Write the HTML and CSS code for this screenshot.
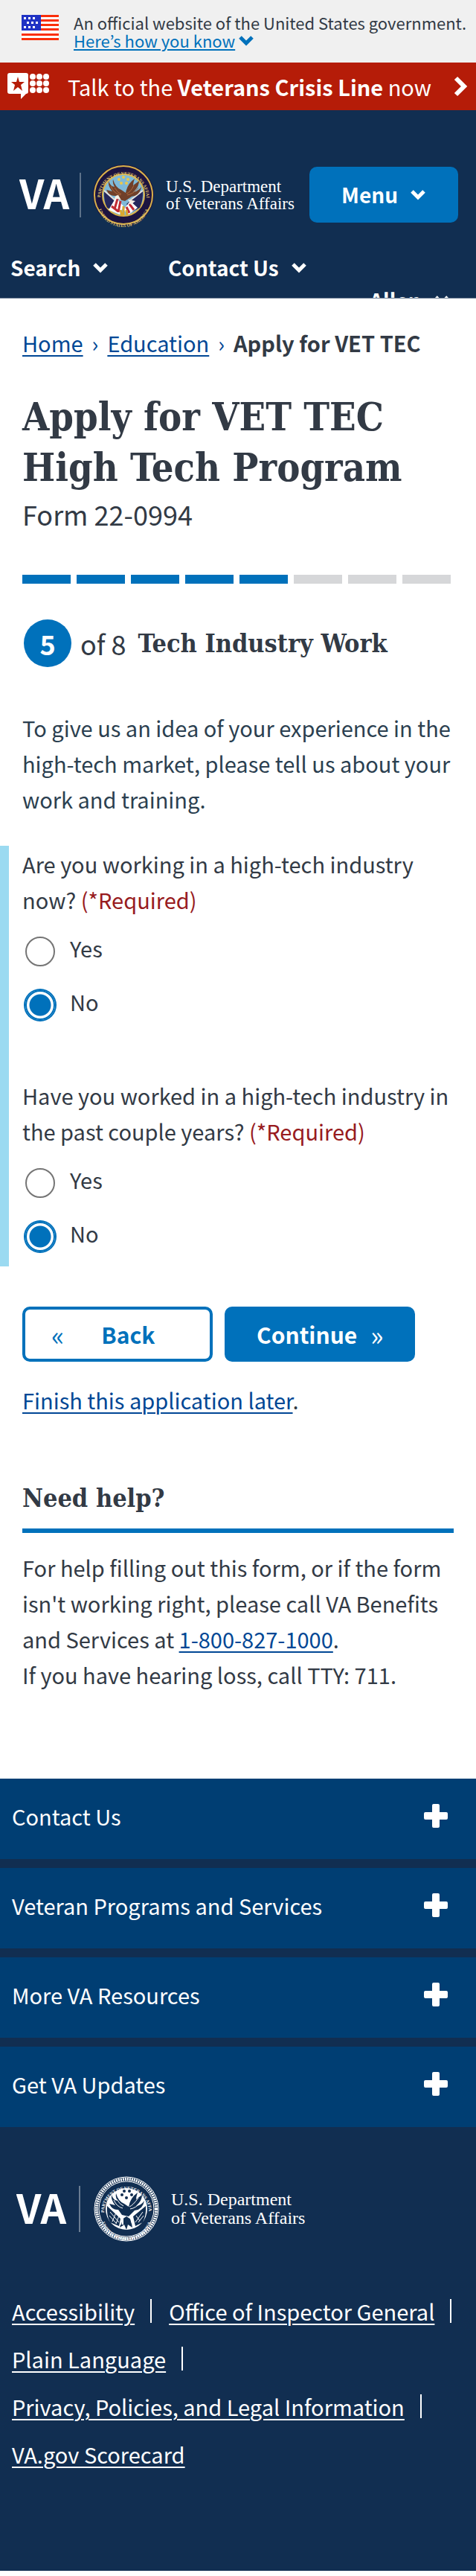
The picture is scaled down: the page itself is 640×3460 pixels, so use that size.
FILE: index.html
```html
<!DOCTYPE html>
<html lang="en">
<head>
<meta charset="utf-8">
<meta name="viewport" content="width=device-width, initial-scale=1">
<title>Apply for VET TEC | Veterans Affairs</title>
<link rel="stylesheet" href="styles.css">
</head>
<body>
<svg class="defs" aria-hidden="true">
  <symbol id="chevron-down" viewBox="0 0 22 16"><path d="M3 4l8 8 8-8" fill="none" stroke="currentColor" stroke-width="5"/></symbol>
  <symbol id="plus" viewBox="0 0 32 32"><path d="M13 0h6q2 0 2 2v9h9q2 0 2 2v6q0 2-2 2h-9v9q0 2-2 2h-6q-2 0-2-2v-9H2q-2 0-2-2v-6q0-2 2-2h9V2q0-2 2-2z" fill="currentColor"/></symbol>
</svg>

<div class="gov">
  <svg class="gov-flag" viewBox="0 0 50 34" aria-hidden="true">
    <path fill="#fff" d="M0 0h50v34H0z"/>
    <path fill="#fa2f0a" d="M0 0h50v3H0zM0 6h50v3H0zM0 12h50v3H0zM0 18h50v3H0zM0 25h50v3H0zM0 31h50v3H0z"/>
    <path fill="#1f32c4" d="M0 0h26v21H0z"/>
    <path fill="#fff" d="M3 3h3v3H3zM9 3h3v3H9zM15 3h3v3h-3zM7 9h3v3H7zM13 9h3v3h-3zM19 9h3v3h-3zM3 15h3v3H3zM9 15h3v3H9zM15 15h3v3h-3z"/>
  </svg>
  <div class="gov-text">
    <p>An official website of the United States government.</p>
    <a class="gov-link" href="#"><span>Here’s how you know</span><svg class="chevron" aria-hidden="true"><use href="#chevron-down"/></svg></a>
  </div>
</div>

<a class="crisis" href="#">
  <svg class="crisis-icon" viewBox="0 0 56 36" aria-hidden="true">
    <path fill="#fff" d="M3 0h22q3 0 3 3v22q0 3-3 3l-7 7v-7H3q-3 0-3-3V3q0-3 3-3z"/>
    <path fill="#b51c08" d="M14 5l2 7h7l-5 4 2 8-6-5-6 5 2-8-5-4h7z"/>
    <g fill="#fff"><circle cx="34" cy="5" r="4"/><circle cx="43" cy="5" r="4"/><circle cx="52" cy="5" r="4"/><circle cx="34" cy="14" r="4"/><circle cx="43" cy="14" r="4"/><circle cx="52" cy="14" r="4"/><circle cx="34" cy="23" r="4"/><circle cx="43" cy="23" r="4"/><circle cx="52" cy="23" r="4"/></g>
  </svg>
  <span class="crisis-text">Talk to the <b>Veterans Crisis Line</b> now</span>
  <svg class="crisis-arrow" viewBox="0 0 20 28" aria-hidden="true"><path d="M4 3l11 11L4 25" fill="none" stroke="#fff" stroke-width="6"/></svg>
</a>

<header class="header">
  <div class="header-main">
    <svg class="logo" viewBox="0 0 380 88" role="img" aria-label="VA, U.S. Department of Veterans Affairs">
      <text class="logo-va" x="0" y="63">VA</text>
      <path d="M82 14v60" stroke="#a9b4c1"/>
      <g transform="translate(140 44)">
        <circle r="41" fill="#1c1440"/>
        <circle r="39" fill="none" stroke="#d9b24a" stroke-width="2"/>
        <circle r="28" fill="#7fb9d8" stroke="#d9b24a" stroke-width="2"/>
        <path id="ring-top" d="M-31 4A31 31 0 1 1 31 4" fill="none"/>
        <path id="ring-bottom" d="M-36 7A36 36 0 0 0 36 7" fill="none"/>
        <text class="seal-text gold"><textPath href="#ring-top" startOffset="50%">DEPARTMENT OF VETERANS AFFAIRS</textPath></text>
        <text class="seal-text gold"><textPath href="#ring-bottom" startOffset="50%">UNITED STATES OF AMERICA</textPath></text>
        <g fill="#ecc94a"><circle cx="0" cy="-24" r="2"/><circle cx="-6" cy="-21" r="2"/><circle cx="6" cy="-21" r="2"/><circle cx="-3" cy="-16" r="2"/><circle cx="4" cy="-16" r="2"/></g>
        <path fill="#25275c" d="M-26-6L-4 14-9 23-22 17q-5-9-4-23zM26-6L4 12l7 11 11-6q5-11 4-23z"/>
        <path d="M-26-6L-8 10M26-6L8 8" stroke="#e9e4dd" stroke-width="2"/>
        <path fill="#fff" d="M-10 3L0 15l-5 11-15-6zM9 8l10 9-12 9-7-6z"/>
        <path fill="none" stroke="#bf2b35" stroke-width="3" d="M-8 5l-4 14M-4 8l-3 15M-16 15l9 7M8 12l6 8M4 16l4 8"/>
        <path fill="#70402a" d="M-20-19q2 7 8 8-3-5-2-10 3 11 11 14L3-3q2-12 12-19-2 6-2 9l8-6q0 8-8 15 7-1 11-7-2 12-13 13L2 8l-8-2-5-5q-8 1-12-8l8 2q-6-7-5-14z"/>
        <path stroke="#b06b3f" fill="none" d="M-17-12q4 10 13 12M-12-10q4 7 9 9M20-10Q13-1 5 0M14-13Q9-3 4-2"/>
        <path fill="#f4efe6" d="M-7 0q-5 0-5 6l4-1 5 2zM6 6l10 2-6 5z"/>
        <path stroke="#d9a72e" stroke-width="3" fill="none" d="M0 15v12M-4 20l2 8M4 20l1 7"/>
      </g>
      <text class="logo-dept logo-dept-top" x="197" y="40">U.S. Department</text>
      <text class="logo-dept logo-dept-top" x="197" y="63">of Veterans Affairs</text>
    </svg>
    <button class="menu" type="button">Menu<svg class="chevron" aria-hidden="true"><use href="#chevron-down"/></svg></button>
  </div>
  <nav class="nav" aria-label="Account">
    <button type="button">Search<svg class="chevron" aria-hidden="true"><use href="#chevron-down"/></svg></button>
    <button type="button">Contact Us<svg class="chevron" aria-hidden="true"><use href="#chevron-down"/></svg></button>
    <button class="nav-user" type="button">Allen<svg class="chevron" aria-hidden="true"><use href="#chevron-down"/></svg></button>
  </nav>
</header>

<main class="main">
  <nav class="crumbs" aria-label="Breadcrumb">
    <a href="#">Home</a><span class="sep">›</span><a href="#">Education</a><span class="sep">›</span><b>Apply for VET TEC</b>
  </nav>
  <h1 class="title">Apply for VET TEC High Tech Program</h1>
  <p class="subtitle">Form 22-0994</p>
  <div class="progress" role="progressbar" aria-label="Form progress" aria-valuemin="0" aria-valuemax="8" aria-valuenow="5">
    <span class="done"></span><span class="done"></span><span class="done"></span><span class="done"></span><span class="done"></span><span></span><span></span><span></span>
  </div>
  <div class="step">
    <span class="step-num">5</span>
    <span class="step-of">of 8</span>
    <h2 class="step-title">Tech Industry Work</h2>
  </div>
  <p class="intro">To give us an idea of your experience in the high-tech market, please tell us about your work and training.</p>

  <form>
    <div class="questions">
      <fieldset>
        <legend>Are you working in a high-tech industry now? <span class="required">(*Required)</span></legend>
        <div class="option"><input type="radio" name="now" id="now-yes"><label for="now-yes">Yes</label></div>
        <div class="option"><input type="radio" name="now" id="now-no" checked><label for="now-no">No</label></div>
      </fieldset>
      <fieldset>
        <legend>Have you worked in a high-tech industry in the past couple years? <span class="required">(*Required)</span></legend>
        <div class="option"><input type="radio" name="past" id="past-yes"><label for="past-yes">Yes</label></div>
        <div class="option"><input type="radio" name="past" id="past-no" checked><label for="past-no">No</label></div>
      </fieldset>
    </div>
    <div class="actions">
      <button class="btn btn-back" type="button"><span class="arrows">«</span>Back</button>
      <button class="btn btn-next" type="submit">Continue<span class="arrows">»</span></button>
    </div>
  </form>
  <p class="later"><a href="#">Finish this application later</a>.</p>

  <section>
    <h2 class="help-title">Need help?</h2>
    <p class="help-text">For help filling out this form, or if the form isn't working right, please call VA Benefits and Services at <a href="#">1-800-827-1000</a>.<br>If you have hearing loss, call TTY: 711.</p>
  </section>
</main>

<footer class="footer">
  <div class="accordion">
    <button type="button">Contact Us<svg class="plus" aria-hidden="true"><use href="#plus"/></svg></button>
    <button type="button">Veteran Programs and Services<svg class="plus" aria-hidden="true"><use href="#plus"/></svg></button>
    <button type="button">More VA Resources<svg class="plus" aria-hidden="true"><use href="#plus"/></svg></button>
    <button type="button">Get VA Updates<svg class="plus" aria-hidden="true"><use href="#plus"/></svg></button>
  </div>
  <svg class="footer-logo" viewBox="0 0 400 88" role="img" aria-label="VA, U.S. Department of Veterans Affairs">
    <text class="logo-va" x="0" y="64">VA</text>
    <path d="M85 13v62" stroke="#c3cbd5"/>
    <g transform="translate(148 44)">
      <circle r="43" fill="none" stroke="#fff"/>
      <circle r="40" fill="none" stroke="#fff" stroke-width="4" stroke-dasharray="2 1"/>
      <circle r="37" fill="none" stroke="#fff"/>
      <circle r="28" fill="#fff"/>
      <path id="foot-top" d="M-30 4A30 30 0 1 1 30 4" fill="none"/>
      <path id="foot-bottom" d="M-35 7A35 35 0 0 0 35 7" fill="none"/>
      <text class="seal-text white"><textPath href="#foot-top" startOffset="50%">DEPARTMENT OF VETERANS AFFAIRS</textPath></text>
      <text class="seal-text white"><textPath href="#foot-bottom" startOffset="50%">UNITED STATES OF AMERICA</textPath></text>
      <g fill="#112e51">
        <circle cx="-3" cy="-24" r="2"/><circle cx="4" cy="-24" r="2"/><circle cx="-6" cy="-19" r="2"/><circle cx="7" cy="-19" r="2"/><circle cx="0" cy="-15" r="2"/>
        <path d="M-26-4L-8 13l-2 10-12-5q-5-9-4-22zM26-4L9 10l3 13 10-5q5-10 4-22z"/>
        <path d="M-20-19q2 7 8 8-3-5-2-10 3 11 11 14L3-3q2-12 12-19-2 6-2 9l8-6q0 8-8 15 7-1 11-7-2 12-13 13L3 10l-9-2-5-7q-8 1-12-8l8 2q-6-7-5-14z"/>
        <path d="M-6 14l6-4 6 4 2 11-6-4-2 7-3-7-6 4z"/>
      </g>
      <path fill="none" stroke="#fff" d="M-17-12q4 9 12 11M-13-13q4 7 9 9M20-10Q13-1 5 0M16-15Q9-5 4-3M-22 4l12 14M-23 9l9 10M22 4L12 18M23 9l-7 9M-14 5l-5 12M-10 9l-4 11M13 9l5 7"/>
      <path fill="none" stroke="#fff" stroke-width="2" d="M-10 6q5 6 2 15M-5 9v12M5 10l3 10"/>
    </g>
    <text class="logo-dept" x="208" y="39">U.S. Department</text>
    <text class="logo-dept" x="208" y="64">of Veterans Affairs</text>
  </svg>
  <ul class="footer-links">
    <li><a href="#">Accessibility</a></li>
    <li><a href="#">Office of Inspector General</a></li>
    <li><a href="#">Plain Language</a></li>
    <li><a href="#">Privacy, Policies, and Legal Information</a></li>
    <li><a href="#">VA.gov Scorecard</a></li>
  </ul>
</footer>
</body>
</html>
```
FILE: styles.css
```css
:root {
  --sans: "Noto Sans CJK KR", "Open Sans", sans-serif;
  --slab: "DejaVu Serif Condensed", "DejaVu Serif", serif;
  --ink: #323a45;
  --blue: #0071bb;
  --link: #004795;
  --navy: #112e51;
}

* { box-sizing: border-box; }

body {
  margin: 0;
  background: #fff;
  color: var(--ink);
  font: 29px/48px var(--sans);
}

p, h1, h2, ul, fieldset, legend { margin: 0; padding: 0; }
fieldset { border: 0; min-width: 0; }
button { font: inherit; border: 0; padding: 0; cursor: pointer; }

a {
  color: var(--link);
  text-decoration-thickness: 2px;
  text-underline-offset: 4px;
}

.defs { display: none; }
.chevron { width: 22px; height: 16px; flex: none; }

/* Government banner */
.gov {
  display: flex;
  gap: 20px;
  padding: 18px 8px 18px 29px;
  background: #f0f0f0;
  font-size: 22px;
  line-height: 24px;
}
.gov-flag { width: 50px; height: 34px; margin-top: 2px; flex: none; }
.gov-link { display: flex; align-items: center; gap: 4px; color: var(--blue); text-decoration: none; }
.gov-link span { text-decoration: underline 2px; text-underline-offset: 2px; }

/* Crisis line */
.crisis {
  display: flex;
  align-items: center;
  padding: 8px 11px 8px 10px;
  background: #b51c08;
  color: #fff;
  text-decoration: none;
}
.crisis-icon { width: 56px; height: 36px; flex: none; }
.crisis-text { flex: 1; padding-left: 25px; }
.crisis-arrow { width: 20px; height: 28px; flex: none; }

/* Header */
.header {
  overflow: hidden;
  padding-top: 76px;
  background: var(--navy);
  color: #fff;
  font-weight: 700;
  font-size: 28px;
  border-bottom: 1px solid #6d7f95;
}
.header-main {
  display: flex;
  align-items: center;
  justify-content: space-between;
  padding: 0 24px 0 26px;
}
.logo { width: 380px; height: 88px; margin: -8px 0; flex: none; }
.logo-va { font: 700 54px var(--sans); fill: #fff; }
.logo-dept { font: 24px "Liberation Serif", serif; fill: #fff; }
.logo-dept-top { font-size: 23px; }
.seal-text { font: 700 6px "Liberation Serif", serif; text-anchor: middle; }
.gold { fill: #e3c56b; }
.white { fill: #fff; }
.menu {
  display: flex;
  align-items: center;
  justify-content: center;
  gap: 16px;
  width: 200px;
  padding: 13px 0 14px;
  border-radius: 10px;
  background: var(--blue);
  color: #fff;
}
.nav {
  display: grid;
  grid-template-columns: 212fr 271fr 143fr;
  align-items: start;
  max-height: 65px;
  margin-top: 36px;
  padding-left: 14px;
}
.nav button {
  display: flex;
  align-items: center;
  gap: 16px;
  background: none;
  color: #fff;
}
.nav .nav-user { margin-top: 44px; }

/* Main column */
.main { padding: 35px 30px 116px; }
.crumbs { display: flex; flex-wrap: wrap; }
.sep { padding: 0 12px; color: var(--link); }
.title {
  margin-top: 42px;
  font: 700 52px/68px var(--slab);
}
.subtitle { margin-top: 4px; font-size: 36px; }
.progress {
  display: grid;
  grid-template-columns: repeat(8, 1fr);
  gap: 8px;
  margin: 58px 4px 48px 0;
}
.progress span { height: 12px; background: #d6d7d9; }
.progress .done { background: var(--blue); }
.step { display: flex; align-items: center; padding-left: 2px; }
.step-num {
  width: 64px;
  border-radius: 50%;
  background: var(--blue);
  color: #fff;
  font-weight: 700;
  font-size: 36px;
  line-height: 64px;
  text-align: center;
}
.step-of { padding: 0 16px 0 12px; font-size: 36px; }
.step-title { font: 700 34px/48px var(--slab); }
.intro { margin: 57px 0 39px; color: #2b3f50; }

.questions {
  display: grid;
  gap: 78px;
  margin-left: -30px;
  padding: 0 0 21px 18px;
  border-left: 12px solid #9bdaf1;
}
.required { color: #981b1e; }
.option {
  display: flex;
  align-items: flex-start;
  gap: 20px;
  margin-top: 17px;
  padding-left: 4px;
}
.option + .option { margin-top: 24px; }
.option input {
  appearance: none;
  width: 40px;
  height: 40px;
  margin: 9px 0 -1px;
  border: 2px solid #757575;
  border-radius: 50%;
  background: #fff;
}
.option input:checked {
  border-color: var(--blue);
  box-shadow: 0 0 0 2px var(--blue);
  background: radial-gradient(circle, var(--blue) 14px, #fff 15px);
}

.actions { display: flex; gap: 16px; margin-top: 54px; }
.btn {
  display: flex;
  align-items: center;
  width: 256px;
  padding: 13px 40px;
  border-radius: 10px;
  font-weight: 700;
  font-size: 30px;
}
.btn .arrows { font-weight: 400; font-size: 36px; }
.btn-back {
  gap: 50px;
  padding: 9px 35px;
  border: 4px solid var(--blue);
  background: #fff;
  color: var(--blue);
}
.btn-next { gap: 18px; padding-left: 43px; background: var(--blue); color: #fff; }
.later { margin-top: 27px; }

.help-title {
  margin: 84px 0 22px;
  padding-bottom: 17px;
  border-bottom: 6px solid var(--blue);
  font: 700 34px/48px var(--slab);
}

/* Footer */
.footer { margin-bottom: 6px; padding-bottom: 125px; background: var(--navy); color: #fff; }
.accordion { display: grid; gap: 12px; }
.accordion button {
  display: flex;
  align-items: center;
  justify-content: space-between;
  padding: 26px 38px 34px 16px;
  background: #003e73;
  color: #fff;
  text-align: left;
}
.plus { width: 32px; height: 32px; flex: none; }
.footer-logo { display: block; width: 400px; height: 88px; margin: 66px 22px 61px; }
.footer-links {
  display: flex;
  flex-wrap: wrap;
  padding-left: 16px;
  list-style: none;
  line-height: 64px;
}
.footer-links li { display: flex; align-items: center; }
.footer-links a { color: #fff; }
.footer-links li:not(:last-child)::after {
  content: "";
  height: 32px;
  margin: 0 23px 0 21px;
  border-left: 2px solid #fff;
}
```
